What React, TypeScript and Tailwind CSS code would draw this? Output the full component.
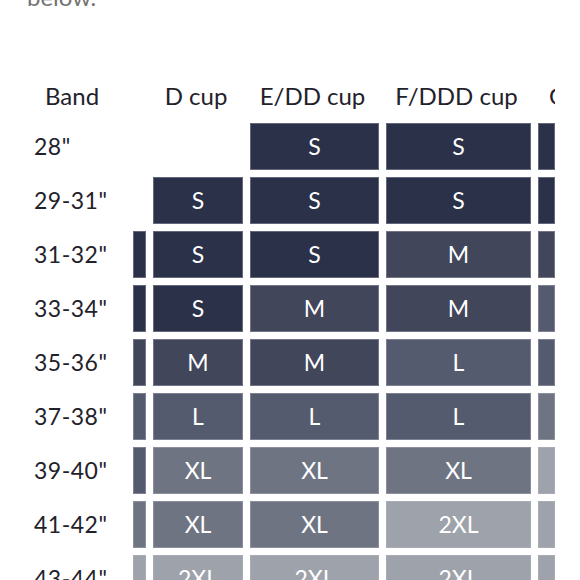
import React from 'react';

type Size = 'S' | 'M' | 'L' | 'XL' | '2XL' | '';

interface Row {
  band: string;
  sizes: Size[]; // C (clipped), D, E/DD, F/DDD, G (clipped)
}

const rows: Row[] = [
  { band: '28"', sizes: ['', '', 'S', 'S', 'S'] },
  { band: '29-31"', sizes: ['', 'S', 'S', 'S', 'S'] },
  { band: '31-32"', sizes: ['S', 'S', 'S', 'M', 'M'] },
  { band: '33-34"', sizes: ['S', 'S', 'M', 'M', 'L'] },
  { band: '35-36"', sizes: ['M', 'M', 'M', 'L', 'L'] },
  { band: '37-38"', sizes: ['L', 'L', 'L', 'L', 'XL'] },
  { band: '39-40"', sizes: ['L', 'XL', 'XL', 'XL', '2XL'] },
  { band: '41-42"', sizes: ['XL', 'XL', 'XL', '2XL', '2XL'] },
  { band: '43-44"', sizes: ['2XL', '2XL', '2XL', '2XL', '2XL'] },
];

const sizeColor = (size: Size) => {
  switch (size) {
    case 'S':
      return 'bg-[#2b3149]';
    case 'M':
      return 'bg-[#41465b]';
    case 'L':
      return 'bg-[#555b6e]';
    case 'XL':
      return 'bg-[#6f7482]';
    case '2XL':
      return 'bg-[#9ea2ab]';
    default:
      return 'bg-transparent';
  }
};

function SizeCell({ size, clipped }: { size: Size; clipped?: boolean }) {
  if (!size) return <div />;
  return (
    <div
      className={`h-[47px] flex items-center justify-center overflow-hidden border border-[#b9bcc6]/40 text-white text-[23px] ${sizeColor(size)}`}
    >
      {!clipped && size}
    </div>
  );
}

export default function App() {
  const cols = 'grid grid-cols-[126px_13px_90px_129px_145px_17px] gap-x-[7px]';

  return (
    <div className="w-[580px] h-[580px] overflow-hidden bg-white font-['Lato',sans-serif] text-[#1f222b]">
      <p className="-mt-[19px] pl-[27px] text-[24px] leading-[32px] text-[#737373]">below.</p>

      <div className="mt-[56px] w-[555px] overflow-hidden">
        {/* Header */}
        <div className={`${cols} h-[54px] items-center text-[24px]`}>
          <div className="pl-[45px]">Band</div>
          <div />
          <div className="text-center whitespace-nowrap -ml-[4px]">D cup</div>
          <div className="text-center whitespace-nowrap -ml-[4px]">E/DD cup</div>
          <div className="text-center whitespace-nowrap -ml-[4px]">F/DDD cup</div>
          <div className="pl-[11px] whitespace-nowrap overflow-hidden">G cup</div>
        </div>

        {/* Body */}
        <div className={`${cols} gap-y-[7px]`}>
          {rows.map((row) => (
            <React.Fragment key={row.band}>
              <div className="h-[47px] flex items-center pl-[34px] text-[23px] tracking-[0.5px]">
                {row.band}
              </div>
              {row.sizes.map((s, i) => (
                <SizeCell key={i} size={s} clipped={i === 0 || i === 4} />
              ))}
            </React.Fragment>
          ))}
        </div>
      </div>
    </div>
  );
}
